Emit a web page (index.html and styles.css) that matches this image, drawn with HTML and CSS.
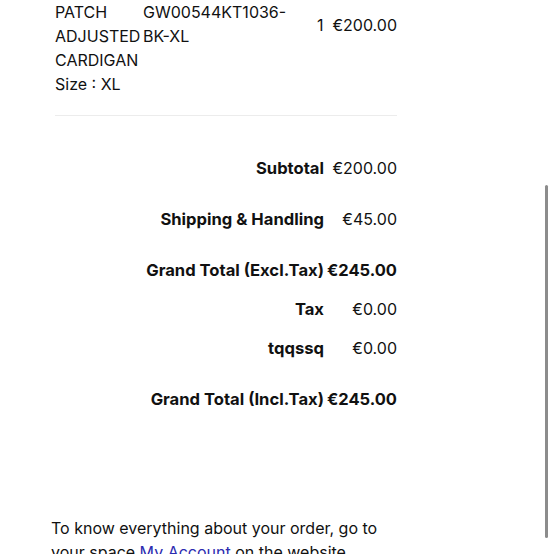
FILE: index.html
```html
<!DOCTYPE html>
<html>
<head>
<meta charset="utf-8">
<link rel="stylesheet" href="styles.css">
</head>
<body>
<div class="page">
  <div class="order">
    <div class="item">
      <div class="name">PATCH ADJUSTED CARDIGAN<div>Size : XL</div></div>
      <div class="sku">GW00544KT1036-BK-XL</div>
      <div class="qty">1</div>
      <div class="price">€200.00</div>
    </div>
    <div class="totals">
      <div class="row wide"><span class="label">Subtotal</span><span class="value">€200.00</span></div>
      <div class="row wide"><span class="label">Shipping &amp; Handling</span><span class="value">€45.00</span></div>
      <div class="row"><span class="label">Grand Total (Excl.Tax)</span><span class="value strong">€245.00</span></div>
      <div class="row"><span class="label">Tax</span><span class="value">€0.00</span></div>
      <div class="row wide"><span class="label">tqqssq</span><span class="value">€0.00</span></div>
      <div class="row last"><span class="label">Grand Total (Incl.Tax)</span><span class="value strong">€245.00</span></div>
    </div>
  </div>
  <p class="note">To know everything about your order, go to your space <a href="#">My Account</a> on the website.</p>
</div>
<div class="scrollbar"></div>
</body>
</html>
```

FILE: styles.css
```css
html, body {
  margin: 0;
  padding: 0;
  background: #fff;
  overflow: hidden;
}
body {
  font-family: Inter, "Noto Sans", sans-serif;
  font-size: 16px;
  line-height: 24px;
  color: #111;
  width: 554px;
  height: 554px;
  position: relative;
}
.page {
  padding-left: 51px;
}
.order {
  width: 342px;
  margin-left: 4px;
}
.item {
  display: grid;
  grid-template-columns: 88px 1fr auto auto;
  padding-bottom: 19px;
  border-bottom: 1px solid #ececec;
}
.sku {
  padding-right: 20px;
}
.qty, .price {
  padding-top: 13px;
}
.qty {
  padding-right: 9px;
}
.totals {
  padding-top: 40px;
}
.row {
  display: grid;
  grid-template-columns: 1fr 73px;
  padding-bottom: 15px;
}
.row.wide {
  padding-bottom: 27px;
}
.row.last {
  padding-bottom: 0;
}
.label {
  font-weight: 700;
  font-size: 16.6px;
  text-align: right;
}
.value {
  text-align: right;
}
.value.strong {
  font-weight: 700;
  font-size: 16.5px;
}
.note {
  margin: 105px 0 0 0;
  width: 340px;
}
.note a {
  color: #2b2bb0;
  text-decoration: none;
}
.scrollbar {
  position: absolute;
  left: 545px;
  top: 185px;
  width: 3px;
  height: 353px;
  border-radius: 2px;
  background: #8c8c8c;
}
```
